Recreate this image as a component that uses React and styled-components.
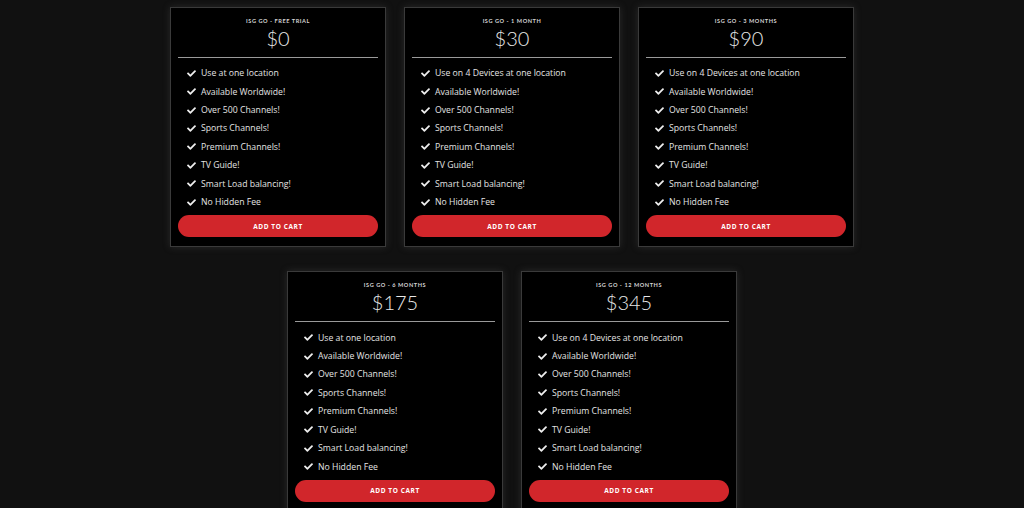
import React from 'react'
import styled, { createGlobalStyle } from 'styled-components'
import { FaCheck } from 'react-icons/fa'

const GlobalStyle = createGlobalStyle`
  body {
    margin: 0;
    background: #111111;
    font-family: 'Open Sans', 'Liberation Sans', sans-serif;
  }
`

const Page = styled.div`
  display: flex;
  flex-direction: column;
  align-items: center;
  gap: 24px;
  padding-top: 7px;
`

const Row = styled.div`
  display: flex;
  gap: 18px;
`

const Card = styled.div`
  width: 200px;
  padding: 8px 7px 9px;
  background: #000;
  border: 1px solid #3a3a3a;
  box-shadow: 0 0 7px rgba(70, 70, 70, 0.45);
  display: flex;
  flex-direction: column;
`

const Title = styled.div`
  font-family: 'Lato', 'Open Sans', sans-serif;
  font-weight: 700;
  font-size: 5.6px;
  letter-spacing: 0.55px;
  line-height: 10px;
  text-align: center;
  color: #d4d4d4;
  text-transform: uppercase;
`

const Price = styled.div`
  font-family: 'Lato', sans-serif;
  font-weight: 300;
  font-size: 20px;
  line-height: 24px;
  text-align: center;
  color: #e8e8e8;
`

const Divider = styled.hr`
  border: 0;
  border-top: 1px solid #9a9a9a;
  margin: 7px 0 6px;
`

const List = styled.ul`
  list-style: none;
  margin: 0;
  padding: 0 0 0 9px;
`

const Item = styled.li`
  display: flex;
  align-items: center;
  gap: 5px;
  height: 18.43px;
  font-size: 8.7px;
  color: #e4e4e4;
  svg {
    width: 9px;
    height: 9px;
    color: #eeeeee;
    flex-shrink: 0;
  }
`

const CartButton = styled.button`
  margin-top: 4px;
  height: 22px;
  border: 0;
  border-radius: 11px;
  background: #d1262b;
  color: #fff;
  font-family: 'Open Sans', sans-serif;
  font-weight: 700;
  font-size: 6.5px;
  letter-spacing: 0.6px;
  text-transform: uppercase;
  cursor: pointer;
`

const features = (multi) => [
  multi ? 'Use on 4 Devices at one location' : 'Use at one location',
  'Available Worldwide!',
  'Over 500 Channels!',
  'Sports Channels!',
  'Premium Channels!',
  'TV Guide!',
  'Smart Load balancing!',
  'No Hidden Fee'
]

const plans = [
  [
    { title: 'ISG GO - Free Trial', price: '$0', multi: false },
    { title: 'ISG GO - 1 Month', price: '$30', multi: true },
    { title: 'ISG GO - 3 Months', price: '$90', multi: true }
  ],
  [
    { title: 'ISG GO - 6 Months', price: '$175', multi: false },
    { title: 'ISG GO - 12 Months', price: '$345', multi: true }
  ]
]

const PlanCard = ({ title, price, multi }) => (
  <Card>
    <Title>{title}</Title>
    <Price>{price}</Price>
    <Divider />
    <List>
      {features(multi).map((f) => (
        <Item key={f}>
          <FaCheck />
          {f}
        </Item>
      ))}
    </List>
    <CartButton>Add to cart</CartButton>
  </Card>
)

const App = () => (
  <>
    <GlobalStyle />
    <Page>
      {plans.map((row, i) => (
        <Row key={i}>
          {row.map((p) => (
            <PlanCard key={p.title} {...p} />
          ))}
        </Row>
      ))}
    </Page>
  </>
)

export default App
